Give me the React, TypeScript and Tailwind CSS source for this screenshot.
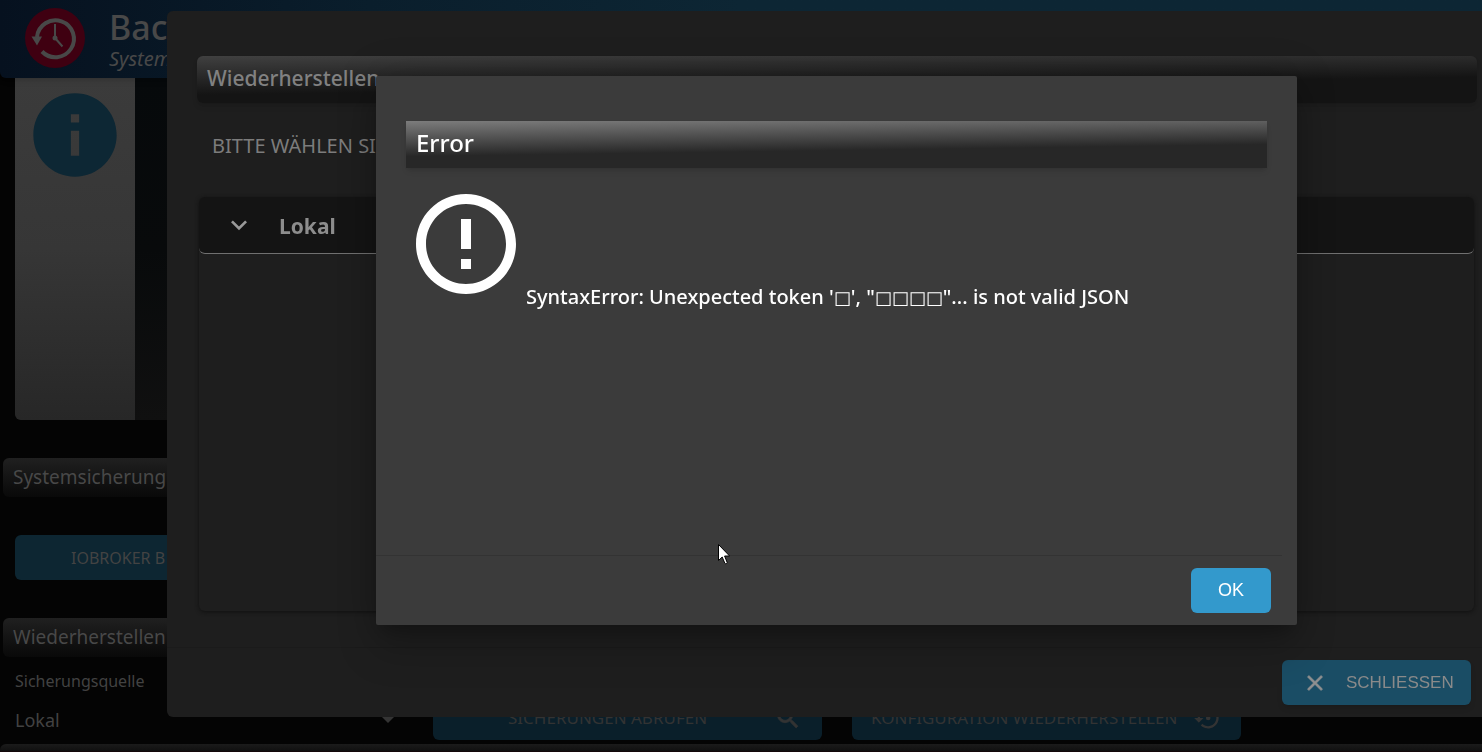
import type { ReactNode } from 'react';

type BarProps = {
  children: ReactNode;
};

function SectionBar({ children }: BarProps) {
  return (
    <h2 className="ml-[3px] h-[39px] rounded-md bg-linear-to-b from-[#202020] to-[#090909] pl-[10px] text-[19px] leading-[39px] text-[#484848]">
      {children}
    </h2>
  );
}

function BackupLogo() {
  return (
    <svg viewBox="0 0 60 60" className="h-[60px] w-[60px] shrink-0" aria-hidden="true">
      <circle cx="30" cy="30" r="30" fill="#3f0011" />
      <path d="M12 29 A18.5 18.5 0 1 1 17 43.5" fill="none" stroke="#484848" strokeWidth="4" />
      <path d="M6.5 28.5 H17 L12 37.5 Z" fill="#484848" />
      <path d="M30 16 V30 L37.5 38.5" fill="none" stroke="#484848" strokeWidth="2" />
      <circle cx="30" cy="30" r="2.5" fill="#484848" />
    </svg>
  );
}

function RestorePage() {
  return (
    <div className="isolate flex h-full flex-col overflow-hidden bg-[#040404]">
      <header className="z-10 flex h-[78px] shrink-0 items-start rounded-bl-md bg-linear-to-r from-[#06111f] via-[#0a1e2c] via-25% to-[#0d2634] to-50% pt-2 pl-[25px] shadow-md">
        <BackupLogo />
        <div className="w-24 pl-6">
          <h1 className="text-[34px] leading-[38px] font-medium text-[#484848]">Bac</h1>
          <p className="text-[20px] leading-[26px] text-[#484848] italic">System</p>
        </div>
      </header>

      <section className="ml-[15px] flex h-[342px] shrink-0 overflow-hidden rounded-b-md bg-linear-to-b from-[#06090b] via-[#080a0b] to-[#101010]">
        <div className="w-[120px] bg-linear-to-b from-[#3b3b3b] via-[#363636] via-50% to-[#272727] pt-[7px] pl-[10px]">
          <svg viewBox="0 0 24 24" className="h-[100px] w-[100px]" fill="#0d2734" aria-hidden="true">
            <path d="M12 2C6.48 2 2 6.48 2 12s4.48 10 10 10 10-4.48 10-10S17.52 2 12 2zm1 15h-2v-6h2v6zm0-8h-2V7h2v2z" />
          </svg>
        </div>
      </section>

      <div className="pt-[38px]">
        <SectionBar>Systemsicherung</SectionBar>
        <button className="mt-[38px] ml-[15px] h-[45px] w-[389px] rounded-md bg-[#0d2632] pl-14 text-left text-[16px] text-[#434343]">
          IOBROKER B
        </button>
      </div>

      <div className="pt-[38px]">
        <SectionBar>Wiederherstellen</SectionBar>
        <div className="flex items-end gap-[30px] pl-[14px]">
          <div className="relative h-[83px] w-[389px] shrink-0 pt-3 pl-px">
            <label htmlFor="source" className="block text-[16px] leading-[24px] text-[#424242]">
              Sicherungsquelle
            </label>
            <select
              id="source"
              className="mt-[7px] h-10 w-full appearance-none bg-transparent text-[18px] text-[#424242]"
            >
              <option>Lokal</option>
            </select>
            <svg viewBox="0 0 12 6" className="absolute right-[9px] bottom-[17px] h-[6px] w-3" fill="#343434" aria-hidden="true">
              <path d="M0 0h12L6 6z" />
            </svg>
          </div>
          <button className="flex h-[45px] w-[389px] shrink-0 items-center justify-between rounded-md bg-[#0a1f2a] pr-5 pl-[75px] text-[17px] text-[#333333]">
            SICHERUNGEN ABRUFEN
            <svg viewBox="0 0 24 24" className="h-7 w-7" fill="#333333" stroke="#333333" strokeWidth=".6" aria-hidden="true">
              <path d="M15.5 14h-.79l-.28-.27C15.41 12.59 16 11.11 16 9.500 16 5.910 13.090 3 9.500 3S3 5.910 3 9.500 5.910 16 9.500 16c1.610 0 3.090-.59 4.230-1.570l.27.28v.79l5 4.990L20.490 19l-4.990-5zm-6 0C7.010 14 5 11.990 5 9.500S7.010 5 9.500 5 14 7.010 14 9.500 11.990 14 9.500 14z" />
            </svg>
          </button>
          <button className="flex h-[45px] w-[389px] shrink-0 items-center justify-between rounded-md bg-[#0a1f2a] pr-5 pl-[19px] text-[17px] text-[#333333]">
            KONFIGURATION WIEDERHERSTELLEN
            <svg viewBox="0 0 24 24" className="h-7 w-7" fill="#333333" aria-hidden="true">
              <path d="M13 3a9 9 0 0 0-9 9H1l3.890 3.890.07.14L9 12H6a7 7 0 1 1 2.060 4.940l-1.420 1.420A9 9 0 1 0 13 3z" />
              <circle cx="13" cy="12" r="2" />
            </svg>
          </button>
        </div>
      </div>

      <footer className="mt-1 h-2 shrink-0 rounded-tl-md border-b border-[#14080a] bg-linear-to-b from-[#1b1b1b] to-[#101010]" />
    </div>
  );
}

function RestoreDialog() {
  return (
    <div className="fixed inset-0 pt-[11px] pb-[35px] pl-[167px]">
      <div role="dialog" aria-label="Wiederherstellen" className="flex h-full flex-col rounded-l-md bg-[#1e1e1e]">
        <div className="flex min-h-0 flex-1 flex-col pt-[45px] pl-[30px]">
          <h2 className="mr-[5px] h-[47px] shrink-0 rounded-md bg-[linear-gradient(179.2deg,#404040_0%,#141414_60%)] pl-[10px] text-[21px] leading-[45px] font-medium text-[#818181] shadow-md">
            Wiederherstellen
          </h2>
          <p className="pt-7 pl-[15px] text-[20px] leading-[30px] text-[#7c7c7c]">BITTE WÄHLEN SI</p>
          <div className="mt-9 mr-2 mb-9 ml-[2px] min-h-0 flex-1 rounded-md shadow-[0_1px_4px_#101010]">
            <button className="flex h-[57px] w-full items-center rounded-md border-b border-[#707070] bg-[#141414] pl-6 text-[21px] font-bold text-[#8d8d8d]">
              <svg viewBox="0 0 24 24" className="mr-6 h-8 w-8" fill="#9a9a9a" aria-hidden="true">
                <path d="M7.410 8.590 12 13.170l4.590-4.580L18 10l-6 6-6-6z" />
              </svg>
              <span className="pt-1">Lokal</span>
            </button>
          </div>
        </div>
        <div className="flex h-[70px] items-start justify-end border-t border-[#1b1b1b] pt-3 pr-[11px]">
          <button className="flex h-[45px] w-[189px] items-center rounded-md bg-[#1a4d65] pl-5 font-['Liberation_Sans',Arial,sans-serif] text-[17px] text-[#8a8a8a] shadow-md">
            <svg viewBox="0 0 24 24" className="mr-[18px] h-[26px] w-[26px]" fill="#909090" stroke="#909090" strokeWidth=".5" aria-hidden="true">
              <path d="M19 6.410 17.590 5 12 10.590 6.410 5 5 6.410 10.590 12 5 17.590 6.410 19 12 13.410 17.590 19 19 17.590 13.410 12z" />
            </svg>
            SCHLIESSEN
          </button>
        </div>
      </div>
    </div>
  );
}

function ErrorDialog() {
  return (
    <div className="fixed inset-0 pt-[76px] pr-[185px] pb-[127px] pl-[376px]">
      <div
        role="alertdialog"
        aria-label="Error"
        className="flex h-full flex-col rounded-xs bg-[#3b3b3b] shadow-[0_24px_38px_3px_#00000028,0_11px_15px_-7px_#00000033,0_0px_40px_0px_#00000030]"
      >
        <div className="flex-1 px-[30px] pt-[45px]">
          <h2 className="h-[47px] bg-[linear-gradient(179.2deg,#7c7c7c_0%,#272727_60%)] pl-[10px] text-[24px] leading-[43px] font-medium text-white shadow-md">
            Error
          </h2>
          <div className="flex items-end pt-4">
            <svg viewBox="0 0 24 24" className="h-[120px] w-[120px] shrink-0" fill="#ffffff" aria-hidden="true">
              <path d="M11 15h2v2h-2zm0-8h2v6h-2zm.99-5C6.470 2 2 6.480 2 12s4.470 10 9.990 10C17.520 22 22 17.520 22 12S17.520 2 11.990 2zM12 20c-4.420 0-8-3.580-8-8s3.580-8 8-8 8 3.580 8 8-3.580 8-8 8z" />
            </svg>
            <p className="h-[22px] text-[20px] leading-[30px] font-medium whitespace-nowrap text-white">
              SyntaxError: Unexpected token '<span className="text-[18px]">□</span>', "
              <span className="text-[18px]">□□□□</span>"... is not valid JSON
            </p>
          </div>
        </div>
        <div className="mr-[15px] flex h-[70px] items-start justify-end border-t border-[#333333] pt-3 pr-[11px]">
          <button className="h-[45px] w-20 rounded-md bg-[#3399cc] font-['Liberation_Sans',Arial,sans-serif] text-[18px] text-white">
            OK
          </button>
        </div>
      </div>
      <svg viewBox="0 0 12 21" className="absolute top-[544px] left-[718px] h-[21px] w-3" aria-hidden="true">
        <path
          d="M.5.5v16l3.700-3.500 2.600 6.200c.5 1.100 2.800.2 2.300-.9L6.600 12h5z"
          fill="#ffffff"
          stroke="#000000"
        />
      </svg>
    </div>
  );
}

export default function App() {
  return (
    <main className="h-screen overflow-hidden bg-[#040404] font-['Noto_Sans','DejaVu_Sans',sans-serif]">
      <RestorePage />
      <RestoreDialog />
      <ErrorDialog />
    </main>
  );
}
